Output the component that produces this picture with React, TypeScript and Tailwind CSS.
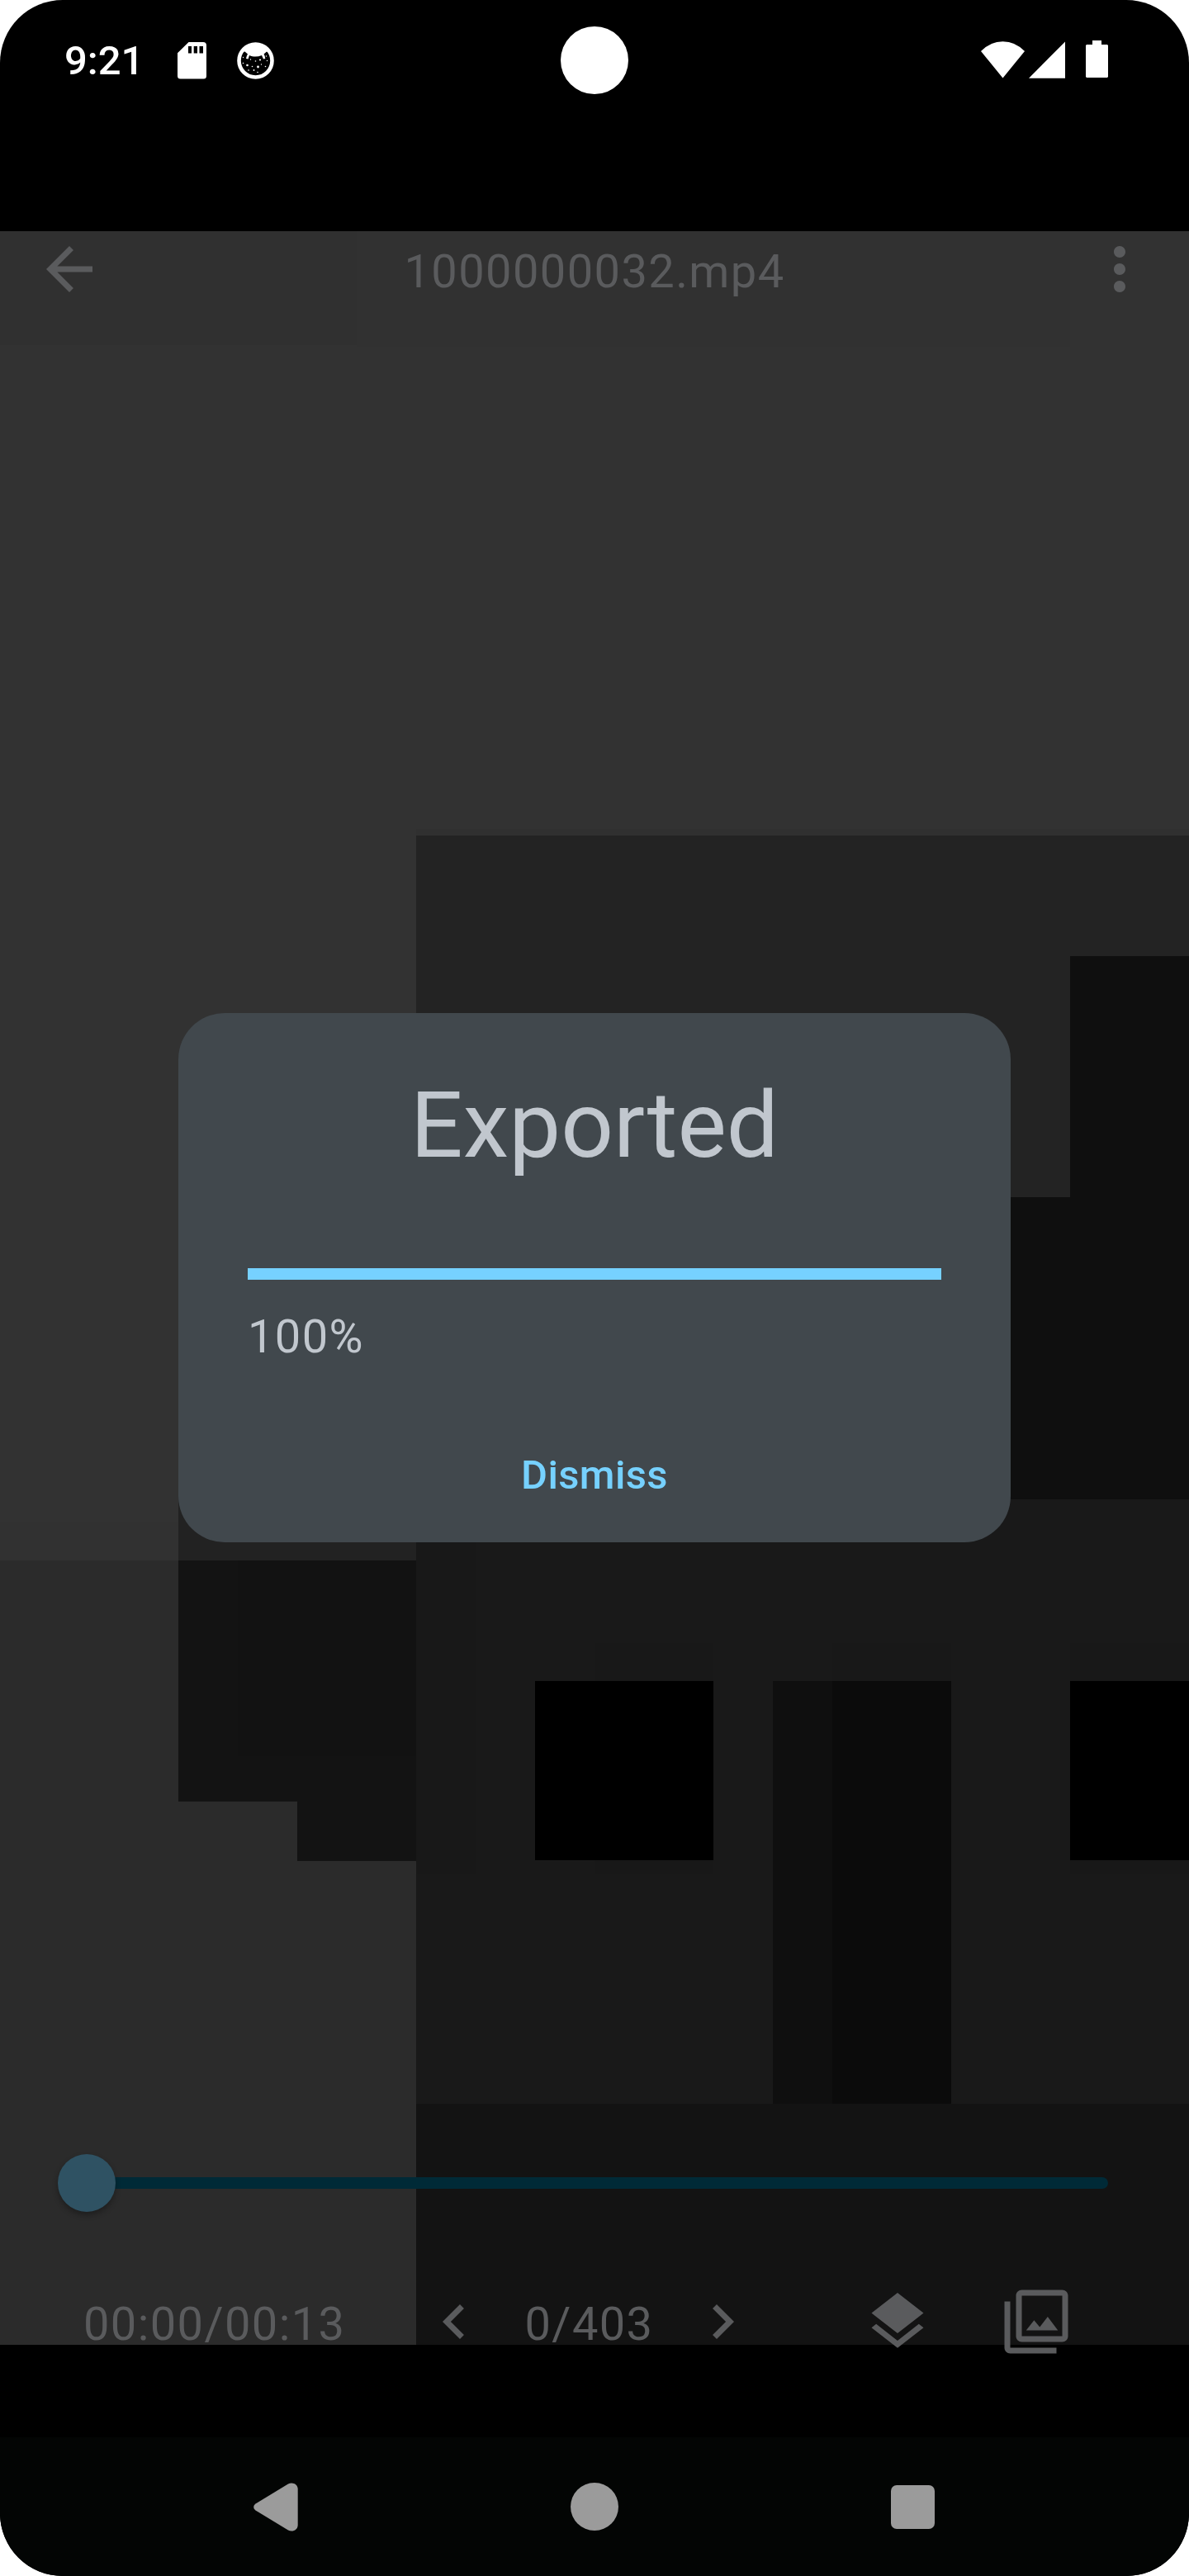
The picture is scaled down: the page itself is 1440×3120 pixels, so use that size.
import {
  MdArrowBack,
  MdFilter,
  MdKeyboardArrowLeft,
  MdKeyboardArrowRight,
  MdLayers,
  MdMoreVert,
} from "react-icons/md";

const FRAME_BLOCKS: [number, number, number, number, string][] = [
  [0, 280, 1440, 2560, "#323232"],
  [0, 280, 432, 138, "#303030"],
  [432, 280, 864, 140, "#313131"],
  [504, 1004, 936, 8, "#303030"],
  [0, 1843, 216, 47, "#313131"],
  [0, 1890, 504, 950, "#2b2b2b"],
  [504, 1012, 936, 1000, "#232323"],
  [1296, 1158, 144, 660, "#0f0f0f"],
  [1000, 1450, 440, 366, "#0f0f0f"],
  [504, 1816, 936, 732, "#191919"],
  [504, 1868, 72, 402, "#181818"],
  [216, 1780, 288, 110, "#222222"],
  [216, 1890, 288, 292, "#131313"],
  [360, 2181, 144, 73, "#131313"],
  [288, 1890, 216, 237, "#121212"],
  [720, 1990, 144, 280, "#181818"],
  [1008, 1990, 144, 46, "#181818"],
  [1296, 1990, 144, 280, "#181818"],
  [648, 2036, 216, 217, "#000000"],
  [936, 2036, 72, 512, "#0f0f0f"],
  [1008, 2036, 144, 512, "#0b0b0b"],
  [1296, 2036, 144, 217, "#000000"],
  [504, 2548, 936, 292, "#131313"],
];

function VideoFrame() {
  return (
    <svg
      className="absolute inset-0 h-full w-full"
      viewBox="0 0 1440 3120"
      shapeRendering="crispEdges"
      aria-hidden="true"
    >
      {FRAME_BLOCKS.map(([x, y, w, h, fill], i) => (
        <rect key={i} x={x} y={y} width={w} height={h} fill={fill} />
      ))}
    </svg>
  );
}

function CatIcon() {
  return (
    <svg className="ml-[37px] h-[45px] w-[45px]" viewBox="0 0 45 45">
      <circle cx="22.5" cy="22.5" r="20" fill="#000" stroke="#fff" strokeWidth="4.6" />
      <path
        fill="#fff"
        d="M5 11C9 4 15 2 22.5 2S36 4 40 11L36 11.5L32.500 14.500C33.500 16 34 18 34.300 20L32 20.500L30 16C25 18 19.500 18 15 16L13.500 20.500L11 20C11.500 18 12 16 13 14.500L9.500 11.500Z"
      />
      <g fill="#fff">
        <circle cx="12.500" cy="28" r="1.300" />
        <circle cx="25.500" cy="30" r="1.400" />
        <circle cx="28" cy="21.500" r="1.100" />
        <circle cx="16.500" cy="21" r=".7" />
        <circle cx="22.500" cy="23" r=".8" />
        <circle cx="7.500" cy="25.500" r=".8" />
        <circle cx="7.500" cy="18.500" r=".7" />
        <circle cx="18.500" cy="29.500" r=".8" />
        <circle cx="14" cy="34" r=".8" />
        <circle cx="20.500" cy="34" r=".9" />
        <circle cx="25" cy="36.500" r=".8" />
        <circle cx="34.500" cy="29.500" r=".8" />
        <circle cx="29.500" cy="27" r=".7" />
        <circle cx="36.500" cy="22.500" r=".7" />
        <circle cx="35.500" cy="17" r=".7" />
      </g>
    </svg>
  );
}

function StatusBar() {
  return (
    <div className="relative flex h-[280px] items-start text-white">
      <span className="mt-[45px] ml-[78px] w-[91px] text-[49px] leading-[58px] font-medium whitespace-nowrap">
        9:21
      </span>
      <div className="mt-[51px] ml-[46px] flex">
        <svg className="h-[45px] w-[35px]" viewBox="0 0 35 45">
          <path
            fill="#fff"
            fillRule="evenodd"
            d="M13.500 0H31a4 4 0 0 1 4 4V41a3.500 3.500 0 0 1-3.500 3.500H3.500A3.500 3.500 0 0 1 0 41V13.300ZM13 5V13.500H17V5ZM19.700 5V13.500H24V5ZM26.500 5V13.500H31V5Z"
          />
        </svg>
        <CatIcon />
      </div>
      <span className="absolute top-[32px] left-[679px] h-[82px] w-[82px] rounded-full bg-white" />
      <div className="mt-[49px] mr-[98px] ml-auto flex">
        <svg className="h-[46px] w-[53px]" viewBox="0 0 53 46" fill="#fff">
          <path d="M26.500 45.500L0 13Q11.500 1.200 26.500 1.200T53 13Z" />
        </svg>
        <svg className="ml-[5px] h-[46px] w-[44px]" viewBox="0 0 44 46" fill="#fff">
          <path d="M44 1.500V45.700H0Z" />
        </svg>
        <svg className="ml-[25px] h-[46px] w-[27px]" viewBox="0 0 27 46" fill="#fff">
          <path d="M8 0H19V5H26L27 6V44L26 45H1L0 44V6L1 5H8Z" />
        </svg>
      </div>
    </div>
  );
}

function AppBar() {
  return (
    <div className="flex justify-between px-[42px] pt-[4px] text-[#5a5b5d]">
      <MdArrowBack className="size-[84px]" />
      <span className="mt-[3px] text-[56px] leading-[84px] tracking-[1.4px]">1000000032.mp4</span>
      <MdMoreVert className="size-[84px]" />
    </div>
  );
}

function PlayerControls() {
  return (
    <div className="mt-auto text-[#5a5b5d]">
      <div className="ml-[70px] flex h-[70px] w-[1272px] items-center">
        <span className="z-10 size-[70px] shrink-0 rounded-full bg-[#2f5263] shadow-[0_4px_7px_rgba(0,0,0,0.3)]" />
        <span className="-ml-[20px] h-[14px] flex-1 rounded-r-full bg-[#002a37]" />
      </div>
      <div className="mt-[91px] flex h-[84px] items-start">
        <span className="mt-[3px] ml-[101px] w-[407px] text-[56px] leading-[84px] tracking-[1.4px]">
          00:00/00:13
        </span>
        <MdKeyboardArrowLeft className="size-[84px]" />
        <span className="mt-[3px] w-[241px] pl-[2px] text-center text-[56px] leading-[84px] tracking-[1.4px]">
          0/403
        </span>
        <MdKeyboardArrowRight className="size-[84px]" />
        <MdLayers className="ml-[128px] size-[84px]" />
        <MdFilter className="ml-[84px] size-[84px]" />
      </div>
    </div>
  );
}

function NavigationBar() {
  return (
    <div className="mt-[98px] flex h-[168px] items-center bg-[#030504]">
      <svg className="ml-[307px] h-[59px] w-[54px]" viewBox="0 0 54 59" fill="#9b9b9b">
        <path d="M2.500 25.500L42 1.500C47-1.200 53.700 1.500 53.700 8V51C53.700 57.500 47 60.200 42 57.500L2.500 33.500C-.5 31.300-.5 27.700 2.500 25.500Z" />
      </svg>
      <span className="ml-[330px] size-[58px] rounded-full bg-[#9b9b9b]" />
      <span className="ml-[330px] size-[53px] rounded-[7px] bg-[#9b9b9b]" />
    </div>
  );
}

function ExportDialog() {
  return (
    <div
      role="dialog"
      className="absolute top-[1227px] left-[216px] flex h-[641px] w-[1008px] flex-col rounded-[56px] bg-[#41484d] px-[84px] text-[#c1c7ce]"
    >
      <h1 className="mt-[66px] text-center text-[112px] leading-[140px] font-normal">Exported</h1>
      <div className="mt-[103px] h-[14px] w-full bg-[#76d1ff]" />
      <span className="mt-[27px] text-[56px] leading-[84px] tracking-[1.4px]">100%</span>
      <button className="mt-[91px] self-center text-[49px] leading-[70px] font-medium tracking-[0.35px] text-[#76d1ff]">
        Dismiss
      </button>
    </div>
  );
}

export default function App() {
  return (
    <div className="h-[3120px] w-[1440px] bg-white">
      <div className="relative h-full w-full overflow-hidden rounded-[76px] bg-black font-[Roboto,sans-serif]">
        <VideoFrame />
        <div className="relative flex h-full flex-col">
          <StatusBar />
          <AppBar />
          <PlayerControls />
          <NavigationBar />
        </div>
        <ExportDialog />
      </div>
    </div>
  );
}
